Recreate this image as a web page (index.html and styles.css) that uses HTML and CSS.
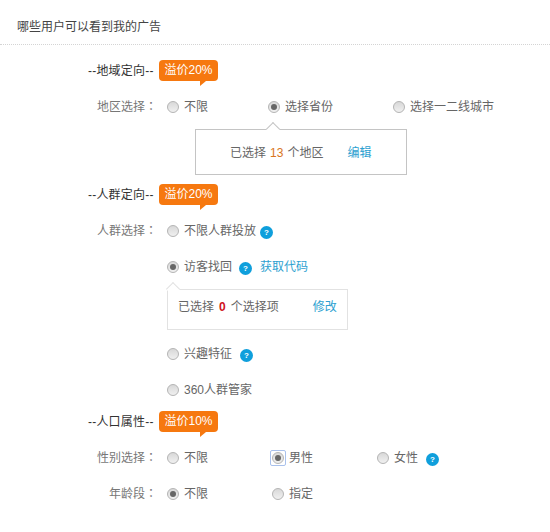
FILE: index.html
```html
<!DOCTYPE html>
<html lang="zh-CN">
  <head>
    <meta charset="UTF-8" />
    <title>哪些用户可以看到我的广告</title>
    <link rel="stylesheet" href="styles.css">
  </head>
  <body>
    <h2 class="title">哪些用户可以看到我的广告</h2>

    <!-- 地域定向 -->
    <div class="group-head first">
      <span class="group-name">--地域定向--</span>
      <span class="badge">溢价20%</span>
    </div>
    <div class="row">
      <span class="label">地区选择：</span>
      <label class="opt w100"><i class="radio"></i>不限</label>
      <label class="opt w125"><i class="radio on"></i>选择省份</label>
      <label class="opt"><i class="radio"></i>选择一二线城市</label>
    </div>
    <div class="pop pop-area">
      <span>已选择</span><b class="num-orange">13</b><span>个地区</span><a class="link edit">编辑</a>
    </div>

    <!-- 人群定向 -->
    <div class="group-head second">
      <span class="group-name">--人群定向--</span>
      <span class="badge">溢价20%</span>
    </div>
    <div class="row">
      <span class="label">人群选择：</span>
      <label class="opt"><i class="radio"></i>不限人群投放</label>
      <i class="help h-near">?</i>
    </div>
    <div class="row sub">
      <label class="opt"><i class="radio on"></i>访客找回</label>
      <i class="help">?</i>
      <a class="link code">获取代码</a>
    </div>
    <div class="pop pop-crowd">
      <span>已选择</span><b class="num-red">0</b><span>个选择项</span><a class="link fix">修改</a>
    </div>
    <div class="row sub interest">
      <label class="opt"><i class="radio"></i>兴趣特征</label>
      <i class="help h-far">?</i>
    </div>
    <div class="row sub">
      <label class="opt"><i class="radio"></i>360人群管家</label>
    </div>

    <!-- 人口属性 -->
    <div class="group-head third">
      <span class="group-name">--人口属性--</span>
      <span class="badge">溢价10%</span>
    </div>
    <div class="row">
      <span class="label">性别选择：</span>
      <label class="opt w105"><i class="radio"></i>不限</label>
      <label class="opt w105"><i class="radio on focus"></i>男性</label>
      <label class="opt"><i class="radio"></i>女性</label>
      <i class="help h-far">?</i>
    </div>
    <div class="row">
      <span class="label">年龄段：</span>
      <label class="opt w105"><i class="radio on"></i>不限</label>
      <label class="opt"><i class="radio"></i>指定</label>
    </div>
  </body>
</html>
```

FILE: styles.css
```css
body {
  margin: 0;
  background: #fff;
  color: #666;
  font-family: "Liberation Sans", "Noto Sans CJK SC", sans-serif;
  font-size: 12px;
  line-height: 20px;
}

.title {
  margin: 0;
  padding: 17px 0 7px 17px;
  height: 20px;
  font-size: 12px;
  font-weight: normal;
  color: #444;
  border-bottom: 1px dotted #d4d4d4;
}

.group-head {
  display: flex;
  align-items: center;
  padding-left: 88px;
  height: 21px;
}
.group-head.first {
  margin-top: 15px;
}
.group-head.second {
  margin-top: 9px;
}
.group-head.third {
  margin-top: 11px;
}
.group-name {
  width: 71px;
  color: #333;
  letter-spacing: 0.2px;
}
.badge {
  position: relative;
  width: 59px;
  height: 21px;
  line-height: 21px;
  text-align: center;
  color: #fff;
  font-size: 12px;
  background: #f6780f;
  border-radius: 4px;
}
.badge::after {
  content: "";
  position: absolute;
  left: 41px;
  top: 21px;
  border-top: 5px solid #f6780f;
  border-right: 6px solid transparent;
}

.row {
  display: flex;
  align-items: center;
  height: 20px;
  margin-top: 16px;
}
.row.sub {
  padding-left: 167px;
}
.row.interest {
  margin-top: 14px;
}
.label {
  width: 157px;
  margin-right: 10px;
  text-align: right;
  color: #777;
  font-family: "Liberation Sans", "Noto Sans CJK TC", sans-serif;
  font-feature-settings: "locl" 0;
}

.opt {
  display: flex;
  align-items: center;
  color: #666;
}
.w100 {
  width: 101px;
}
.w125 {
  width: 125px;
}
.w105 {
  width: 105px;
}

.radio {
  box-sizing: border-box;
  position: relative;
  width: 12px;
  height: 12px;
  margin-right: 5px;
  border: 1px solid #b4b4b4;
  border-radius: 50%;
  background: linear-gradient(#d8d8d8, #f0f0f0);
}
.radio.on::after {
  content: "";
  position: absolute;
  left: 2px;
  top: 2px;
  width: 6px;
  height: 6px;
  border-radius: 50%;
  background: #666;
}
.radio.focus::before {
  content: "";
  position: absolute;
  left: -3px;
  top: -3px;
  width: 14px;
  height: 14px;
  border: 1px solid #a9c1ec;
  border-radius: 2px;
}

.help {
  width: 13px;
  height: 13px;
  margin: 2px 0 0 7px;
  border-radius: 50%;
  background: #0f9fdc;
  color: #fff;
  font-size: 8px;
  font-style: normal;
  font-weight: bold;
  line-height: 13px;
  text-align: center;
}
.h-near {
  margin-left: 4px;
}
.h-far {
  margin-left: 8px;
}

.link {
  color: #2d9fd0;
}
.code {
  margin-left: 8px;
}

.pop {
  position: relative;
  box-sizing: border-box;
  display: flex;
  align-items: center;
  background: #fff;
}
.pop::before {
  content: "";
  position: absolute;
  top: -6px;
  width: 9px;
  height: 9px;
  background: #fff;
  transform: rotate(45deg);
}
.pop-area {
  width: 212px;
  height: 46px;
  margin: 12px 0 0 195px;
  padding: 2px 0 0 34px;
  border: 1px solid #c4c4c4;
}
.pop-area::before {
  left: 72px;
  border-left: 1px solid #c4c4c4;
  border-top: 1px solid #c4c4c4;
}
.pop-crowd {
  width: 181px;
  height: 41px;
  margin: 12px 0 0 167px;
  padding: 0 0 5px 10px;
  border: 1px solid #e2e2e2;
}
.pop-crowd::before {
  left: 0;
  border-left: 1px solid #e2e2e2;
  border-top: 1px solid #e2e2e2;
}
.num-orange {
  margin: 0 4px;
  font-weight: normal;
  color: #d9761d;
}
.num-red {
  margin: 0 5px;
  color: #d0121b;
  font-weight: bold;
}
.edit {
  margin-left: 24px;
}
.fix {
  margin-left: 34px;
}
```
